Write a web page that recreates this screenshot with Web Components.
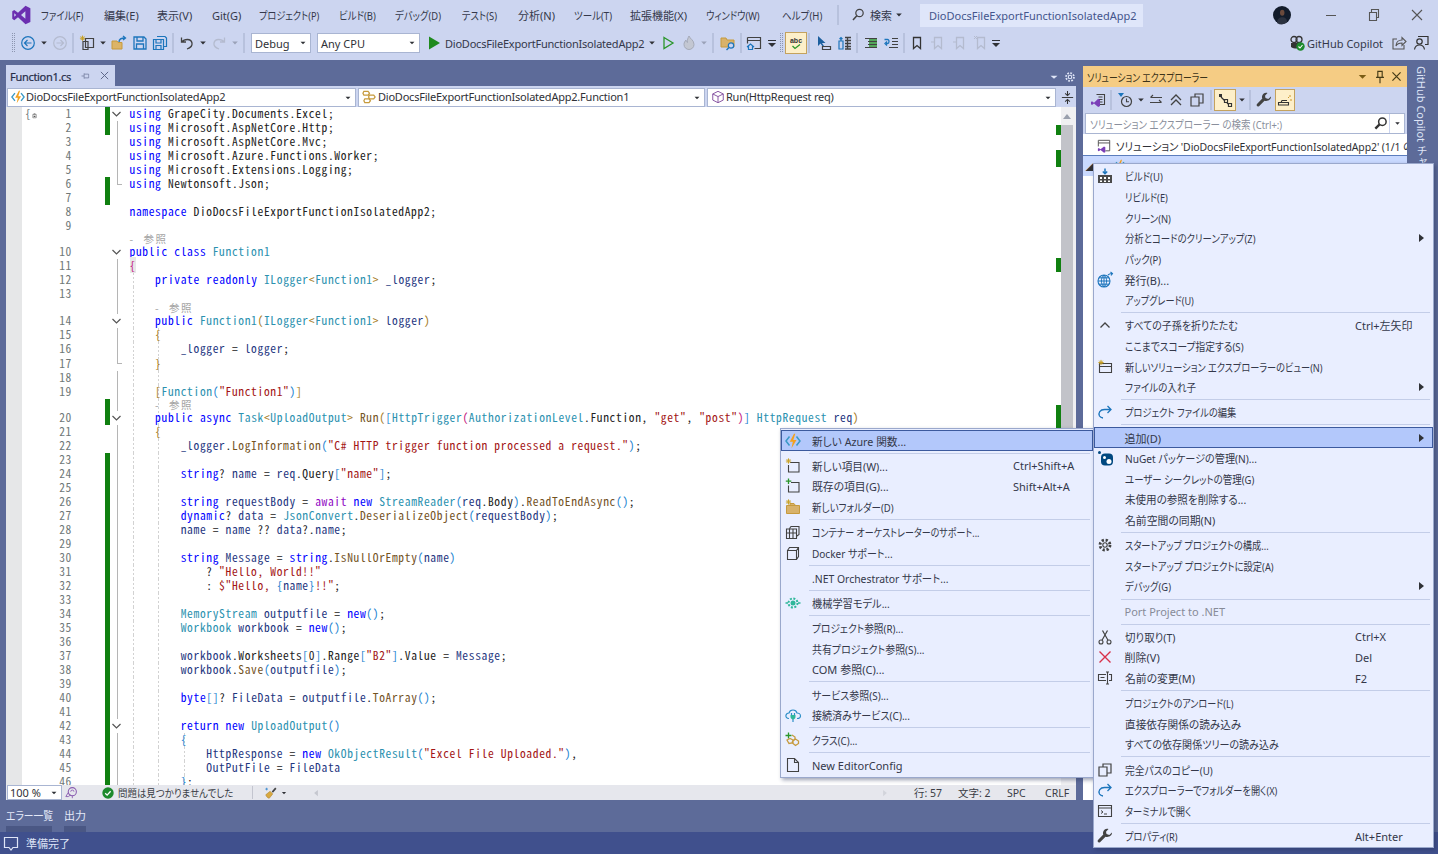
<!doctype html>
<html lang="ja"><head><meta charset="utf-8"><title>DioDocsFileExportFunctionIsolatedApp2</title>
<style>
html,body{margin:0;height:100%;overflow:hidden;background:#5d6b99}
body{font:11px "Noto Sans","Noto Sans CJK JP",sans-serif;font-feature-settings:"palt";color:#2f3136}
</style></head><body>
<vs-app>
  <vs-bar slot="title" h="30">
    <vs-tool w="41" i="logo" s="20" style="padding-left:0"></vs-tool>
    <vs-mi w="63">ファイル(F)</vs-mi><vs-mi w="53">編集(E)</vs-mi><vs-mi w="55">表示(V)</vs-mi><vs-mi w="47">Git(G)</vs-mi><vs-mi w="80">プロジェクト(P)</vs-mi><vs-mi w="56">ビルド(B)</vs-mi><vs-mi w="67">デバッグ(D)</vs-mi><vs-mi w="56">テスト(S)</vs-mi><vs-mi w="56">分析(N)</vs-mi><vs-mi w="56">ツール(T)</vs-mi><vs-mi w="76">拡張機能(X)</vs-mi><vs-mi w="76">ウィンドウ(W)</vs-mi><vs-mi w="53">ヘルプ(H)</vs-mi>
    <vs-tool w="6" i="sep"></vs-tool><vs-tool w="7"></vs-tool><vs-tool w="20" i="find"></vs-tool><vs-tool w="2"></vs-tool><vs-mi w="24">検索</vs-mi><vs-tool w="10" i="drop"></vs-tool>
    <vs-tool w="16"></vs-tool>
    <vs-titlebox>DioDocsFileExportFunctionIsolatedApp2</vs-titlebox>
    <vs-tool w="130"></vs-tool><vs-tool w="18" i="avatar" s="18"></vs-tool><vs-tool w="19"></vs-tool>
    <vs-tool w="42" i="min"></vs-tool><vs-tool w="43" i="restore"></vs-tool><vs-tool w="43" i="close"></vs-tool>
  </vs-bar>
  <vs-bar slot="tools" h="30" style="padding-bottom:4px;box-sizing:border-box">
    <vs-tool w="10"></vs-tool><vs-tool w="8" i="grip"></vs-tool><vs-tool w="20" i="back"></vs-tool><vs-tool w="12" i="drop"></vs-tool><vs-tool w="20" i="fwd"></vs-tool><vs-tool w="6" i="sep"></vs-tool>
    <vs-tool w="22" i="new"></vs-tool><vs-tool w="10" i="drop"></vs-tool><vs-tool w="22" i="open"></vs-tool><vs-tool w="20" i="save"></vs-tool><vs-tool w="20" i="saveall"></vs-tool><vs-tool w="6" i="sep"></vs-tool>
    <vs-tool w="22" i="undo"></vs-tool><vs-tool w="10" i="drop"></vs-tool><vs-tool w="22" i="redo"></vs-tool><vs-tool w="10" i="dropg"></vs-tool><vs-tool w="8" i="sep"></vs-tool><vs-tool w="3"></vs-tool>
    <vs-combo w="60" h="20">Debug</vs-combo><vs-tool w="6"></vs-tool><vs-combo w="103" h="20">Any CPU</vs-combo><vs-tool w="3"></vs-tool>
    <vs-tool w="22" i="play"></vs-tool><vs-mi w="202" style="letter-spacing:-.22px">DioDocsFileExportFunctionIsolatedApp2</vs-mi><vs-tool w="10" i="drop"></vs-tool><vs-tool w="22" i="playo"></vs-tool><vs-tool w="20" i="flame"></vs-tool><vs-tool w="10" i="dropg"></vs-tool><vs-tool w="8" i="sep"></vs-tool>
    <vs-tool w="22" i="fsearch"></vs-tool><vs-tool w="4" i="sep"></vs-tool><vs-tool w="22" i="win"></vs-tool><vs-tool w="13" i="over"></vs-tool><vs-tool w="7" i="grip"></vs-tool><vs-tool w="22" i="abc" sel></vs-tool><vs-tool w="4" i="sep"></vs-tool>
    <vs-tool w="25" i="cur1"></vs-tool><vs-tool w="17" i="cur2"></vs-tool><vs-tool w="8" i="sep"></vs-tool><vs-tool w="20" i="lines1"></vs-tool><vs-tool w="20" i="lines2"></vs-tool><vs-tool w="6" i="sep"></vs-tool>
    <vs-tool w="20" i="bm"></vs-tool><vs-tool w="22" i="bmg"></vs-tool><vs-tool w="21" i="bmg"></vs-tool><vs-tool w="21" i="bmx"></vs-tool><vs-tool w="10" i="over"></vs-tool>
    <vs-tool w="286"></vs-tool><vs-tool w="20" i="copilot"></vs-tool><vs-mi w="82">GitHub Copilot</vs-mi><vs-tool w="19" i="share"></vs-tool><vs-tool w="26" i="feedback"></vs-tool>
  </vs-bar>
  <vs-docs slot="left"></vs-docs>
  <vs-solution slot="right"></vs-solution>
  <vs-strip slot="strip">GitHub Copilot チャット</vs-strip>
  <vs-status slot="status">準備完了</vs-status>

  <vs-menu slot="over" x="780" y="428" w="314" ic="31" il="4" sc="61" pt="1.2" sl="28" style="height:350px">
    <vs-item i="bolt" hl>新しい Azure 関数...</vs-item><vs-sep></vs-sep>
    <vs-item i="newitem" sc="Ctrl+Shift+A">新しい項目(W)...</vs-item><vs-item i="additem" sc="Shift+Alt+A">既存の項目(G)...</vs-item><vs-item i="newfolder">新しいフォルダー(D)</vs-item><vs-sep></vs-sep>
    <vs-item i="container">コンテナー オーケストレーターのサポート...</vs-item><vs-item i="docker">Docker サポート...</vs-item><vs-sep></vs-sep>
    <vs-item>.NET Orchestrator サポート...</vs-item><vs-sep></vs-sep>
    <vs-item i="ml">機械学習モデル...</vs-item><vs-sep></vs-sep>
    <vs-item>プロジェクト参照(R)...</vs-item><vs-item>共有プロジェクト参照(S)...</vs-item><vs-item>COM 参照(C)...</vs-item><vs-sep></vs-sep>
    <vs-item>サービス参照(S)...</vs-item><vs-item i="cloud">接続済みサービス(C)...</vs-item><vs-sep></vs-sep>
    <vs-item i="cls">クラス(C)...</vs-item><vs-sep></vs-sep>
    <vs-item i="file">New EditorConfig</vs-item>
  </vs-menu>
  <vs-menu slot="over" x="1093" y="163" w="341" ic="30.5" il="3" sc="59" pt="2" sl="27">
    <vs-item i="build">ビルド(U)</vs-item><vs-item>リビルド(E)</vs-item><vs-item>クリーン(N)</vs-item><vs-item arrow>分析とコードのクリーンアップ(Z)</vs-item><vs-item>パック(P)</vs-item><vs-item i="globe">発行(B)...</vs-item><vs-item>アップグレード(U)</vs-item><vs-sep></vs-sep>
    <vs-item i="up" sc="Ctrl+左矢印">すべての子孫を折りたたむ</vs-item><vs-item>ここまでスコープ指定する(S)</vs-item><vs-item i="newview">新しいソリューション エクスプローラーのビュー(N)</vs-item><vs-item arrow>ファイルの入れ子</vs-item><vs-sep></vs-sep>
    <vs-item i="redirect">プロジェクト ファイルの編集</vs-item><vs-sep></vs-sep>
    <vs-item hl arrow>追加(D)</vs-item><vs-item i="nuget">NuGet パッケージの管理(N)...</vs-item><vs-item>ユーザー シークレットの管理(G)</vs-item><vs-item>未使用の参照を削除する...</vs-item><vs-item>名前空間の同期(N)</vs-item><vs-sep></vs-sep>
    <vs-item i="gear">スタートアップ プロジェクトの構成...</vs-item><vs-item>スタートアップ プロジェクトに設定(A)</vs-item><vs-item arrow>デバッグ(G)</vs-item><vs-sep></vs-sep>
    <vs-item dis>Port Project to .NET</vs-item><vs-sep></vs-sep>
    <vs-item i="cut" sc="Ctrl+X">切り取り(T)</vs-item><vs-item i="del" sc="Del">削除(V)</vs-item><vs-item i="rename" sc="F2">名前の変更(M)</vs-item><vs-sep></vs-sep>
    <vs-item>プロジェクトのアンロード(L)</vs-item><vs-item>直接依存関係の読み込み</vs-item><vs-item>すべての依存関係ツリーの読み込み</vs-item><vs-sep></vs-sep>
    <vs-item i="copy">完全パスのコピー(U)</vs-item><vs-item i="redirect">エクスプローラーでフォルダーを開く(X)</vs-item><vs-item i="term">ターミナルで開く</vs-item><vs-sep></vs-sep>
    <vs-item i="wrench" sc="Alt+Enter">プロパティ(R)</vs-item>
  </vs-menu>
</vs-app>
<script>
const st=(c,w=1.2,x='')=>`fill="none" stroke="${c}" stroke-width="${w}" ${x}`;
const D='#424242',B='#1c75bc',G='#b4bbcf',Y='#c69a3d';
const star=(x,y)=>`<path ${st('#c9a227',1)} d="M${x} ${y-2.6}v5.2M${x-2.6} ${y}h5.2M${x-1.8} ${y-1.8}l3.6 3.6M${x+1.8} ${y-1.8}l-3.6 3.6"/>`;
const dropP=c=>`<path fill="${c}" d="M5.2 6.5h5.6L8 9.5z"/>`;
const bm=c=>`<path ${st(c,1.3)} d="M4.5 2.5h7v11L8 10.5l-3.5 3z"/>`;
const ICONS={
logo:`<path fill="#6b2fb0" fill-rule="evenodd" d="M11.6.6 15.5 2.5v11l-3.9 1.9-6-5.6-3 2.3L1 11V5l1.6-1.1 3 2.3zM11.5 5 8 8l3.5 3zM2.6 6.6v2.8L4.2 8z"/>`,
sep:`<path stroke="#a3aeca" d="M8 -2v20"/>`,
grip:`<path stroke="#8c96b0" stroke-dasharray="1 1" d="M6.5 -2v20M8.5 -2v20"/>`,
drop:dropP('#2f3136'),dropg:dropP('#9aa2b8'),
find:`<circle cx="9.5" cy="6" r="3.7" ${st(D)}/><path ${st(D,1.5)} d="M6.8 8.8 3 13"/>`,
avatar:`<circle cx="8" cy="8" r="8" fill="#121c2b"/><ellipse cx="8.2" cy="6" rx="2" ry="2.6" fill="#6a4a3c"/><path fill="#2b3240" d="M3.5 15c.5-4 2.5-5 4.7-5s4 1 4.5 4.5A8 8 0 0 1 3.500 15z"/>`,
min:`<path stroke="#555" d="M3 8.5h10"/>`,
restore:`<path ${st('#555',1.1)} d="M3.500 5.500h7v8h-7zM5.500 5.500v-3h7v8h-2"/>`,
close:`<path ${st('#555',1.1)} d="M3 3l10 10M13 3 3 13"/>`,
back:`<circle cx="8" cy="8" r="6.300" ${st(B)}/><path ${st(B,1.200)} d="M11.500 8h-7M7.500 5 4.500 8l3 3"/>`,
fwd:`<circle cx="8" cy="8" r="6.300" ${st(G)}/><path ${st(G,1.200)} d="M4.500 8h7M8.500 5l3 3-3 3"/>`,
new:`<path ${st(D)} d="M6.500 3.500h8v9h-8zM4 6.500h5v8H4z"/>${star(3.500,3.200)}`,
open:`<path fill="#dcb467" stroke="${Y}" d="M1 6h5l1 1.500h4V14H1z"/><path ${st(B,1.300)} d="M8 7c0-3 2-4 6-4M12 1l2.500 2L12 5"/>`,
save:`<path ${st(B,1.300)} d="M2 2h10l2 2v10H2zM5 2v4h6V2M4.500 14V9h7v5"/>`,
saveall:`<path ${st(B,1.200)} d="M5 1.500h8l1.500 1.500v8.500H12M3 4.500h8.500V14.500H1.500V4.500zM4 4.500V8h5V4.500M4 14.500v-4h5v4"/>`,
undo:`<path ${st(D,1.300)} d="M2.500 2.500v4.500H7M3 7c2-3 9-4 10 1 .5 3-2 5-5 6"/>`,
redo:`<path ${st(G,1.300)} d="M13.500 2.500v4.500H9M13 7c-2-3-9-4-10 1-.5 3 2 5 5 6"/>`,
play:`<path fill="#1e8a1e" d="M3 1.500 14 8 3 14.500z"/>`,
playo:`<path ${st('#2a962a',1.300)} d="M4 2.500 13 8l-9 5.500z"/>`,
flame:`<path fill="#c3c7d2" stroke="#a5aab8" d="M8 1c1 3 5 4 5 8.500 0 3-2.500 5-5 5s-5-2-5-5c0-2 1-3.500 2-4.500 0 1.500 .5 2 1.500 2.500C6 5 7 3 8 1z"/>`,
fsearch:`<path fill="#d8b26a" stroke="${Y}" d="M1 3h5l1 2h7v7H1z"/><circle cx="11" cy="10.500" r="2.700" fill="#ccd5f0" stroke="${B}" stroke-width="1.200"/><path ${st(B,1.500)} d="M9 12.500 6.500 15"/>`,
win:`<path ${st(D)} d="M1.500 2.500h13v11h-6M1.500 2.500v6M1.500 5.500h13"/><path ${st(B,1.200)} d="M1 12l3.500-3L8 12M2.500 11v3.500h4V11"/>`,
over:`<path stroke="#2f3136" d="M4 5.500h8"/><path fill="#2f3136" d="M4 8h8l-4 4z"/>`,
abc:`<text x="8" y="7.500" text-anchor="middle" font-family="Liberation Sans" font-weight="700" font-size="7" fill="#333">abc</text><path ${st('#2a962a',1.300)} d="M4.500 11l2.500 2.500L12 9.500"/>`,
cur1:`<path fill="#1c5f9e" d="M2 1v10l2.500-2.500L7 12l1-1-2-3h3.500z"/><path ${st(D,1.200)} fill="#555" d="M6.500 11.500h8v3h-8z"/>`,
cur2:`<path ${st(B,1.200)} d="M2 6h4v8H2zM4 6V3M2.500 4 4 2.500 5.500 4"/><path stroke="${D}" stroke-width="1.300" d="M8 2.500h6M8 5.500h6M8 8.500h6M8 11.500h6M8 14h6M10.500 2v12"/>`,
lines1:`<path stroke="${D}" d="M2 3.500h12M5 6.500h9M5 9.500h9M2 12.500h12"/><path stroke="#2a962a" stroke-width="1.300" d="M6 5h8M6 8h8M6 11h8"/>`,
lines2:`<path ${st(B,1.300)} d="M1.500 4.500h3c2 0 2 4 0 4H3M4 6.500 2 8.500l2 2"/><path stroke="${D}" d="M9 3.500h6M9 6.500h6M9 9.500h6M6 12.500h9"/>`,
bm:bm('#333'),bmg:bm(G)+`<path ${st(G,1)} d="M1 7h3"/>`,bmx:bm(G)+`<path ${st(G,1)} d="M1 1l3 3M4 1 1 4"/>`,
copilot:`<circle cx="5" cy="4.500" r="3" ${st('#333',1.300)}/><circle cx="10" cy="4.500" r="3" ${st('#333',1.300)}/><path fill="#333" d="M2 8h11v4c-3 2-8 2-11 0z"/><circle cx="11.500" cy="11.500" r="4.200" fill="#1d8a2c"/><path ${st('#fff',1.100)} d="M9.500 11.500l1.500 1.500 2.500-3"/>`,
share:`<path ${st('#555',1.100)} d="M6 4H2v10h11v-4"/><path ${st('#555',1.100)} d="M5 11c0-4 3-6 6-6V2.500l4 4-4 4V8c-3 0-5 1-6 3z"/>`,
feedback:`<circle cx="6.500" cy="6.500" r="2.700" ${st('#333',1.200)}/><path ${st('#333',1.200)} d="M1.500 14.500c.5-3 2.500-4.500 5-4.500s4.500 1.500 5 4.500M5 1.500h10v8h-3"/>`,
ddrop:`<path fill="#7a5c14" d="M4 6.500h8L8 10.500z"/>`,
gearw:`<circle cx="8" cy="8" r="2" fill="none" stroke="#dfe5f7" stroke-width="1.300"/><circle cx="8" cy="8" r="4.500" fill="none" stroke="#dfe5f7" stroke-width="2" stroke-dasharray="2 1.500"/>`,
dropw:`<path fill="#dfe5f7" d="M4 6.500h8L8 10z"/>`,
tabpin:`<path ${st('#6f7a9c',1)} d="M2 8h3.500M5.500 4.500v7M5.500 5.500h6v1.500M5.500 10.500h6V9M11.500 7v2"/>`,
tabx:`<path ${st('#5c6688',1.200)} d="M3.500 3.500l9 9M12.500 3.500l-9 9"/>`,
split:`<path stroke="#333" d="M2 8h12"/><path ${st('#333',1.100)} d="M8 1v5M8 10v5M5.500 3.500 8 6l2.500-2.500M5.500 12.500 8 10l2.500 2.500"/>`,
cube:`<path ${st('#8552a1',1.100)} d="M8 1.500 14 4.500v7L8 14.500 2 11.500v-7zM2 4.500 8 7.500l6-3M8 7.500v7"/>`,
clsn:`<path ${st(Y,1.300)} d="M2 2.500h4.500L8 4.500 6.500 6.500H2L1 4.500zM8 6.500h4.500l1.500 2-1.500 2H8L7 8.500zM3 10.500h4.500l1.500 2-1.500 2H3l-1-2z"/>`,
bolt:`<path ${st('#3999c6',1.500)} d="M4.500 3.500 1 8l3.500 4.500M11.500 3.500 15 8l-3.500 4.500"/><path fill="#f4a11d" d="M9 .8 4.800 8.800h3L6.500 15.200l5-8.200H8.300l2-6.200z"/>`,
lock:`<path fill="#fff" stroke="#555" d="M1.500 2.500h6v6h-6z"/><path fill="#555" d="M3 1h3v1H3zM3 5h3v2H3z"/>`,
ok:`<circle cx="8" cy="8" r="6.500" fill="#1d8a2c"/><path ${st('#fff',1.500)} d="M4.800 8.200 7 10.400l4-4.400"/>`,
brush:`<path fill="#d9a93f" stroke="#a87d26" stroke-width=".6" d="M2 10l5-4 3 3-4 5c-1.500 0-3.500-2-4-4z"/><path stroke="#444" stroke-width="2" d="M9.500 7l4-4.500"/><path stroke="#3a8ad0" d="M3 2v3M1.500 3.500h3"/>`,
brain:`<circle cx="9" cy="7" r="5" ${st('#8a5db0',1.300)}/><path ${st('#8a5db0',1.100)} d="M7 7a2 2 0 1 1 4 0M4 8 1 13h3l3-2M9 12v3"/>`,
larrow:`<path fill="#c5c7cf" d="M11 3v10L5 8z"/>`,
rarrow:`<path fill="#d2d4db" d="M5 3v10l6-5z"/>`,
bubble:`<path ${st('#dfe5f7',1.200)} d="M1.500 2.500h13v10H10l-2 2.500-2-2.500H1.500z"/>`,
vsdoc:`<path ${st(D,1.100)} d="M6.500 2.500h8v10H9M8.500 5h4M8.500 7.500h4M8.500 10h4"/><path fill="#7b3fb8" d="M1 10l1-.7 2 1.500L8.200 6.800 10 8v6l-1.800 1-4.200-3.500-2 1.500-1-.7z"/>`,
clock:`<circle cx="9.500" cy="9.500" r="5" ${st(D,1.200)}/><path ${st(D,1.100)} d="M9.500 6.500v3.200h2.500"/><path fill="${B}" d="M1 1h6L4 5z"/>`,
sync:`<path ${st('#444',1.100)} d="M14 5.500H2.500M5 3 2.500 5.500M2 10.500h11.500M11 8l2.500 2.500"/>`,
coll:`<path ${st(D,1.300)} d="M3 8l5-5 5 5M3 13l5-5 5 5"/>`,
copy:`<path ${st(D,1.200)} d="M6 5H2v9h8v-9H6zM6 5V2h8v9h-4"/>`,
tree:`<path ${st('#333',1.200)} d="M3 3v0M4 5l4 4M10 11l1 1"/><path fill="#333" d="M2 2h3v3H2z"/><path ${st('#333')} d="M7.500 7.500h3v3h-3zM11.500 11.500h3v3h-3z"/>`,
wrench:`<path fill="${D}" d="M15 4.500 12.300 7 9.500 6 9 3.700 11.500 1C9.200.2 6.400 1.500 6 4.500c-.1.800 0 1.500.3 2L1 12c-1 1.200.2 3 1.500 2.500l.5-.3 5.500-5.500c3 1 7-1 6.500-4.700z"/>`,
pending:`<path ${st('#333',1.100)} d="M1.500 10.500h10v2.500h-10zM4 10.500l1-2h5"/><path stroke="#c9942c" d="M13 3v2M11 5l1 1M13 8h2"/>`,
search2:`<circle cx="10" cy="6" r="4" ${st('#333',1.600)}/><path stroke="#333" stroke-width="2.500" d="M7 9 2.500 13.500"/>`,
solution:`<path ${st('#555',1.100)} d="M1.500 1.500h13v12h-5M1.500 1.500v7M1.500 4.500h13"/><path fill="#7b3fb8" d="M1 11l1-.7 2 1.500 4-3.300 1.500 1v5.500l-1.500 .7-4-3.200-2 1.500-1-.7z"/>`,
pin:`<path ${st('#453b16',1.300)} d="M5.500 1.500h5v7h-5zM3.500 8.500h9M8 8.500V15"/>`,
xd:`<path ${st('#453b16',1.500)} d="M3 3l10 10M13 3 3 13"/>`,
build:`<path fill="#4a4a4a" d="M1 7h14v8H1z"/><path fill="#fff" d="M3 9h2v2H3zM7 9h2v2H7zM11 9h2v2h-2zM3 12.500h2v1.500H3zM7 12.500h2v1.500H7zM11 12.500h2v1.500h-2z"/><path ${st(B,1.500)} d="M8 .5v5M5.800 3.500 8 5.700l2.200-2.200"/>`,
globe:`<circle cx="7" cy="9" r="6" ${st(B,1.100)}/><path ${st(B,1)} d="M1 9h12M2 5.800h10M2 12.200h10M7 3v12M7 3C3.500 6 3.500 12 7 15M7 3c3.500 3 3.500 9 0 12"/><path ${st(B,1.100)} d="M11 3c1-1 2-1.500 4-1.500M13.500 0 15.500 1.500l-1.500 2"/>`,
up:`<path ${st(D,1.300)} d="M3.500 10.500 8 6l4.500 4.500"/>`,
newview:`<path ${st(D,1.100)} fill="#f4f5fb" d="M2.500 4.500h12v9h-12zM2.500 7.500h12"/>${star(4,3.500)}`,
redirect:`<path ${st(B,1.300)} d="M14 5.500H7.500C3 5.500 1 9 2.500 12c.7 1.200 2 1.800 3.500 2M10.500 2l3.500 3.500L10.500 9"/>`,
nuget:`<circle cx="2.500" cy="2.500" r="1.500" fill="#004880"/><rect x="4" y="3.500" width="12" height="12" rx="4" fill="#004880"/><circle cx="7.500" cy="7.500" r="1.500" fill="#fff"/><circle cx="12" cy="11.500" r="2.500" fill="#fff"/>`,
gear:`<circle cx="8" cy="8" r="2.200" ${st(D,1.100)}/><circle cx="8" cy="8" r="5" ${st(D,2.800,'stroke-dasharray="2.200 1.730"')}/>`,
cut:`<circle cx="4" cy="13" r="2" ${st(D,1.100)}/><circle cx="12" cy="13" r="2" ${st(D,1.100)}/><path ${st(D,1.200)} d="M5 11.300 10.500 1.500M11 11.300 5.500 1.500"/>`,
del:`<path ${st('#d8304a',1.400)} d="M2.500 2.500l11 11M13.500 2.500l-11 11"/>`,
rename:`<path ${st(D,1.100)} d="M9 4.500H1.500v6H9M12 4.500h2.500v6H12M10.500 2v12M9 2h3M9 14h3"/><path stroke="${D}" d="M3.500 7.500h4"/>`,
term:`<path ${st(D,1.100)} d="M1.500 2.500h13v11h-13zM1.500 5h13"/><path ${st(D,1)} d="M4 7.500 6 9l-2 1.500M7 11h3"/>`,
newitem:`<path ${st(D,1.100)} d="M5 4.500h9v9.500H3.500V7"/>${star(3.500,3)}`,
additem:`<path ${st(D,1.100)} d="M6 4.500h8v9.500H3.500V7.500"/><path stroke="#2a962a" stroke-width="1.300" d="M3.500 .5v5.500M.8 3.200h5.500"/>`,
newfolder:`<path fill="#d8b26a" stroke="${Y}" d="M1.500 6.500h13v8h-13z"/><path fill="#d8b26a" stroke="${Y}" d="M5 4.500h4l1.500 2H5z"/>${star(3.500,3)}`,
container:`<path ${st(D,1.100)} d="M4.500 4.500 6 2.500h8v8l-2 1.500M1.500 5h10v9.500h-10zM4.500 5v9.500M8 5v9.500M1.500 9h10"/>`,
docker:`<path ${st(D,1.100)} d="M2.500 5.500h9v9h-9zM2.500 5.500l2-3h9v9l-2 3M11.500 5.500l2-3"/>`,
ml:`<circle cx="8" cy="8" r="2.500" fill="#2fb79a"/><circle cx="8" cy="8" r="4.500" ${st('#2fb79a',2,'stroke-dasharray="2 1.500"')}/><path stroke="#2fb79a" stroke-width="1.300" d="M.5 8h2.500M13 8h2.500"/>`,
cloud:`<path ${st('#2e8fc8',1.200)} d="M4 11.500C1.500 11.500 .5 9.500 1 8c.5-1.500 2-2 3-2 .5-2 2-3 4-3s3.500 1 4 3c1.500 0 3.500 1 3.500 3s-1.500 2.500-3.500 2.500"/><path stroke="#2e8fc8" stroke-width="1.200" d="M8 12v3M6.500 6v2M9.500 6v2"/><path fill="#2fb79a" d="M5.500 8h5v2c0 1.500-1.500 2.500-2.500 2.500S5.500 11.500 5.500 10z"/>`,
cls:`<path stroke="#2a962a" stroke-width="1.300" d="M3.500 .5v6M.5 3.500h6"/><path ${st(Y,1.300)} d="M7 3l3 2v2l-2 1.500M8 9l2.500-2 3 2v2.500l-3 2-2.500-2zM2 8l3-1.500 3 1.500-1 3-3 .5z"/>`,
file:`<path ${st(D,1.100)} d="M2.500 1.500h7l4 4v9h-11zM9.500 1.500v4h4"/>`
};
function def(name,css,html,init){customElements.define(name,class extends HTMLElement{
  constructor(){super();this.attachShadow({mode:'open'}).innerHTML=`<style>${css}</style>${html}`}
  connectedCallback(){init&&init.call(this)}
})}
const icon=(n,s=16)=>`<vs-icon i="${n}" s="${s}"></vs-icon>`;
def('vs-icon',':host{display:inline-flex;flex:none}svg{display:block;overflow:visible}','',function(){
  const s=this.getAttribute('s')||16;const n=this.getAttribute('i');
  if(!this.shadowRoot.querySelector('svg'))this.shadowRoot.innerHTML+=`<svg width="${s}" height="${s}" viewBox="0 0 16 16">${ICONS[n]||''}</svg>`;
});
def('vs-app',`:host{display:grid;grid-template-rows:30px 30px 772px 22px;width:1438px;height:854px;position:relative;overflow:hidden;background:#5d6b99}
 .m{display:flex;min-height:0}`,
 `<slot name="title"></slot><slot name="tools"></slot><div class="m"><slot name="left"></slot><slot name="right"></slot><slot name="strip"></slot></div><slot name="status"></slot><slot name="over"></slot>`);
def('vs-bar',':host{display:flex;align-items:center;background:#ccd5f0;overflow:hidden;height:30px}','<slot></slot>');
def('vs-mi',':host{display:block;flex:none;white-space:nowrap;color:#34384a;font-size:11px}','<slot></slot>',function(){this.style.width=this.getAttribute('w')+'px'});
def('vs-tool',':host{display:flex;flex:none;align-items:center;justify-content:center;height:22px;box-sizing:border-box}:host([sel]){background:#fdefc9;border:1px solid #c4a25e}','<slot></slot>',function(){
  this.style.width=this.getAttribute('w')+'px';
  const n=this.getAttribute('i');
  if(n&&!this.querySelector('vs-icon'))this.innerHTML=icon(n,this.getAttribute('s')||16);
});
def('vs-titlebox',':host{display:flex;align-items:center;flex:none;width:223px;height:23px;box-sizing:border-box;padding-left:9px;background:#dfe6fa;color:#44558c;white-space:nowrap;font-size:11px}','<slot></slot>');
def('vs-combo',`:host{display:flex;align-items:center;flex:none;box-sizing:border-box;background:#fff;border:1px solid #a9b5d2;padding-left:3px;white-space:nowrap;overflow:hidden;color:#2f3136;font-size:11px}
 slot{display:block;flex:1;min-width:0}.a{flex:none;width:14px;height:14px;display:flex;align-items:center;justify-content:center}`,
 `<slot></slot><span class="a">${icon('drop',14)}</span>`,function(){
  if(this.hasAttribute('w'))this.style.width=this.getAttribute('w')+'px';
  this.style.height=(this.getAttribute('h')||19)+'px';
});
def('vs-docs',`:host{display:flex;flex-direction:column;flex:none;width:1083px;height:772px;padding-left:6px;padding-right:7px;box-sizing:border-box}
 .hd{height:26px;display:flex;align-items:flex-end;flex:none}
 .tab{width:109px;height:21px;background:#ccd5f0;display:flex;align-items:center;box-sizing:border-box;padding-left:4px;color:#262d48;font-size:11px;-webkit-text-stroke:.2px #262d48}
 .tab b{font-weight:400;width:70px;letter-spacing:-.3px;white-space:nowrap;padding-top:1px}
 .sp{flex:1}.ctl{display:flex;height:20px;align-items:center;padding-top:2px;box-sizing:border-box;margin-right:-1px}
 .nav{height:21px;flex:none;background:#ccd5f0;display:flex;align-items:flex-end;padding-left:1px;gap:2px}
 .n{display:inline-flex;align-items:center;gap:1px;letter-spacing:-.22px;padding-top:1px}
 .btn{width:19px;display:flex;justify-content:center;padding-bottom:2px}
 vs-editor{flex:1;min-height:0}
 .bot{height:15px;flex:none;background:#e6e7ed;display:flex;align-items:center;padding-left:1px;color:#3a3d45;font-size:10.500px;white-space:nowrap}
 .bot span{flex:none}
 .pt{height:32px;flex:none;display:flex;gap:12px;color:#e4e9f8;font-size:11px;box-sizing:border-box;white-space:nowrap}
 .pt div{border-bottom:6px solid #4a5784;box-sizing:border-box;height:32px;padding-top:8px;line-height:16px}
 .pt span{display:block}`,
 `<div class="hd"><div class="tab"><b>Function1.cs</b>${icon('tabpin',12)}<span style="width:6px"></span>${icon('tabx',13)}</div><div class="sp"></div>
  <div class="ctl">${icon('dropw',14)}<span style="width:2px"></span>${icon('gearw',14)}</div></div>
 <div class="nav"><vs-combo w="349"><span class="n">${icon('bolt',14)}DioDocsFileExportFunctionIsolatedApp2</span></vs-combo>
  <vs-combo w="347"><span class="n">${icon('clsn',15)}DioDocsFileExportFunctionIsolatedApp2.Function1</span></vs-combo>
  <vs-combo w="349"><span class="n">${icon('cube',14)}Run(HttpRequest req)</span></vs-combo>
  <span class="btn">${icon('split',15)}</span></div>
 <vs-editor></vs-editor>
 <div class="bot"><vs-combo w="55" h="15"><span style="margin-left:-1px">100 %</span></vs-combo><span style="width:3px"></span>${icon('brain',13)}<span style="width:23px"></span>${icon('ok',14)}<span style="width:3px"></span><span style="width:134px">問題は見つかりませんでした</span><span style="width:1px;height:13px;background:#c3c5cf"></span><span style="width:11px"></span>${icon('brush',14)}${icon('drop',12)}<span style="width:21px"></span>${icon('larrow',10)}<span style="width:559px"></span>${icon('rarrow',10)}<span style="width:24px"></span><span style="width:44px">行: 57</span><span style="width:49px">文字: 2</span><span style="width:38px">SPC</span><span>CRLF</span></div>
 <div class="pt"><div style="width:46px"><span>エラー一覧</span></div><div style="width:22px"><span>出力</span></div></div>`);
const CODE=`«k|using» GrapeCity.Documents.Excel;
«k|using» Microsoft.AspNetCore.Http;
«k|using» Microsoft.AspNetCore.Mvc;
«k|using» Microsoft.Azure.Functions.Worker;
«k|using» Microsoft.Extensions.Logging;
«k|using» Newtonsoft.Json;

«k|namespace» DioDocsFileExportFunctionIsolatedApp2;

@12:0
«k|public» «k|class» «t|Function1»
«q|{»
    «k|private» «k|readonly» «t|ILogger»«y|<»«t|Function1»«y|>» «p|_logger»;

@13:1
    «k|public» «t|Function1»«y|(»«t|ILogger»«y|<»«t|Function1»«y|>» «p|logger»«y|)»
    «y|{»
        «p|_logger» = «p|logger»;
    «y|}»

    «y|[»«t|Function»«b|(»«s|"Function1"»«b|)»«y|]»
@12:1
    «k|public» «k|async» «t|Task»«y|<»«t|UploadOutput»«y|>» «m|Run»«y|(»«b|[»«t|HttpTrigger»«w|(»«t|AuthorizationLevel».Function, «s|"get"», «s|"post"»«w|)»«b|]» «t|HttpRequest» «p|req»«y|)»
    «y|{»
        «p|_logger».«m|LogInformation»«b|(»«s|"C# HTTP trigger function processed a request."»«b|)»;

        «k|string»? «p|name» = «p|req».Query«b|[»«s|"name"»«b|]»;

        «k|string» «p|requestBody» = «v|await» «k|new» «t|StreamReader»«b|(»«p|req».Body«b|)».«m|ReadToEndAsync»«b|()»;
        «k|dynamic»? «p|data» = «t|JsonConvert».«m|DeserializeObject»«b|(»«p|requestBody»«b|)»;
        «p|name» = «p|name» ?? «p|data»?.«p|name»;

        «k|string» «p|Message» = «k|string».«m|IsNullOrEmpty»«b|(»«p|name»«b|)»
            ? «s|"Hello, World!!"»
            : «s|$"Hello, »«b|{»«p|name»«b|}»«s|!!"»;

        «t|MemoryStream» «p|outputfile» = «k|new»«b|()»;
        «t|Workbook» «p|workbook» = «k|new»«b|()»;

        «p|workbook».Worksheets«b|[»0«b|]».Range«b|[»«s|"B2"»«b|]».Value = «p|Message»;
        «p|workbook».«m|Save»«b|(»«p|outputfile»«b|)»;

        «k|byte»«b|[]»? «p|FileData» = «p|outputfile».«m|ToArray»«b|()»;

        «k|return» «k|new» «t|UploadOutput»«b|()»
        «b|{»
            «p|HttpResponse» = «k|new» «t|OkObjectResult»«b|(»«s|"Excel File Uploaded."»«b|)»,
            «p|OutPutFile» = «p|FileData»
        «b|}»;`;
const esc=s=>s.replace(/&/g,'&amp;').replace(/</g,'&lt;').replace(/>/g,'&gt;');
const toks=l=>{let o='',i=0,re=/«(\w)\|([^»]*)»/g,m;while((m=re.exec(l))){o+=esc(l.slice(i,m.index))+`<span class="${m[1]}">${esc(m[2])}</span>`;i=re.lastIndex}return o+esc(l.slice(i))};
def('vs-editor',`:host{display:flex;background:#fff;overflow:hidden}
 .code{flex:1;min-width:0;overflow:hidden}
 .row{display:flex;height:14.040px;white-space:pre;font:11.500px/12px "Noto Sans CJK JP",sans-serif;font-feature-settings:"hwid";letter-spacing:.65px;font-kerning:none;color:#222}
 .g{flex:none;width:16px;background:#e6e7e8}
 .gl{flex:none;width:50px;text-align:right;color:#6f7878}
 .bl{flex:none;width:38px;display:flex}.gap{width:33px}
 .bar{width:5px}.on{background:#108010}
 .o{flex:none;width:15px}
 .o.vl{background:linear-gradient(#b5b5b5,#b5b5b5) 6.500px 0/1px 100% no-repeat}
 .o.tk{background:linear-gradient(#b5b5b5,#b5b5b5) 6.500px 0/1px 50% no-repeat,linear-gradient(#b5b5b5,#b5b5b5) 6.500px 50%/5px 1px no-repeat}
 .c{flex:1;padding-left:4.500px}
 .c.lens{font:10.500px/12px "Noto Sans CJK JP",sans-serif;font-feature-settings:normal;letter-spacing:1.500px;color:#a3a3a3;word-spacing:5px}
 .k{color:#0000ff}.t{color:#2b91af}.s{color:#a31515}.m{color:#74531f}.p{color:#1f377f}.y{color:#a57a1c}.b{color:#1a82d0}.w{color:#c4197e}.v{color:#8f08c4}
 .q{color:#c4197e;background:#e8e8e8}
 .sb{flex:none;width:20px;display:flex;background:#f0f0f2}
 .mk{width:5px;background:linear-gradient(#fff 0 18px,#108010 18px 28px,#fff 28px 43px,#108010 43px 60px,#fff 60px 151px,#108010 151px 165px,#fff 165px 298px,#108010 298px 321px,#fff 321px)}
 .tr{flex:1;display:flex;flex-direction:column;padding-right:3px}
 .up{height:18px;display:flex;align-items:center;justify-content:center;flex:none}
 .th{flex:1;background:#c2c3c9;margin-bottom:18px}`,
 `<div class="code"></div><div class="sb"><div class="mk"></div><div class="tr"><div class="up"><svg width="10" height="6"><path d="M1 6l4-5 4 5z" fill="#9aa0ad"/></svg></div><div class="th"></div></div></div>`,function(){
  const host=this.shadowRoot.querySelector('.code');if(host.children.length)return;
  const lines=CODE.split('\n');let n=0,h='';
  const chev=new Set([1,10,14,20,42]);
  const guides=(y)=>{let a=[];if(y>=12)a.push(7.5);if(y>=15)a.push(33);if(y>=43)a.push(58.500);
    return a.length?`background:${a.map(x=>`repeating-linear-gradient(#d2d2d2 0 2px,transparent 2px 4px) ${x}px 0/1px 100% no-repeat`).join(',')}`:''};
  const on=y=>(y<=2||y===6||y===7||y===20||y>=23);
  const vl=y=>((y>=1&&y<=6)||y>=10);
  for(const l of lines){
    if(l[0]==='@'){const [ht,lv]=l.slice(1).split(':');
      const next=n+1;
      h+=`<div class="row" style="height:${ht}px"><div class="g"></div><div class="gl"></div><div class="bl"><div class="gap"></div><div class="bar ${next===20?'on':''}"></div></div><div class="o ${vl(next)&&next!==10?'vl':''}"></div><div class="c lens" style="${guides(next)};line-height:${ht}px"><span style="display:inline-block;width:${lv*25.6}px"></span>- 参照</div></div>`;
      continue}
    n++;
    const tk=(n===6||n===17);
    const oc=chev.has(n)?`<svg width="15" height="14" style="display:block;background:#fff"><path d="M2.500 5 6.500 9l4-4" fill="none" stroke="#555" stroke-width="1.200"/></svg>`:'';
    const lc=tk?'tk':(vl(n)&&!chev.has(n)?'vl':'');
    const glyph=n===1?`<div class="gl" style="display:flex;justify-content:space-between;padding-left:3px;box-sizing:border-box"><span style="display:inline-flex;align-items:flex-start">{<span style="margin-top:6px;margin-left:1px;display:flex">${icon('lock',9)}</span></span><span>1</span></div>`:`<div class="gl">${n}</div>`;
    h+=`<div class="row"><div class="g"></div>${glyph}<div class="bl"><div class="gap"></div><div class="bar ${on(n)?'on':''}"></div></div><div class="o ${lc}">${oc}</div><div class="c" style="${guides(n)}">${toks(l)}</div></div>`;
  }
  host.innerHTML=h;
});
def('vs-solution',`:host{display:flex;flex-direction:column;flex:none;width:324px;height:734px;margin-top:6px;background:#fff;overflow:hidden}
 .t{height:21px;flex:none;background:#f5cc84;display:flex;align-items:center;padding-left:4px;color:#3c3318;font-size:11px;white-space:nowrap}
 .t b{font-weight:400;flex:1}
 .t vs-icon{margin-right:1px}
 .tb{height:25px;flex:none;background:#ccd5f0;display:flex;align-items:center;padding-left:4px}
 .s{height:24px;flex:none;background:linear-gradient(#ccd5f0 22px,#fff 22px);padding:1px 2px 0;display:flex;box-sizing:border-box}
 .sb{flex:1;background:#fff;border:1px solid #a9b5d2;display:flex;align-items:center;padding-left:4px;color:#8a8f9c;height:21px;box-sizing:border-box;font-size:11px}
 .sb span{flex:1;white-space:nowrap}
 .sb i{width:1px;height:19px;background:#ccd5f0;margin:0 1px}
 .row{height:19px;flex:none;display:flex;align-items:center;white-space:nowrap;overflow:hidden;font-size:11px;color:#2f3136}
 .row>span{flex:none}
 .sel{background:#c9d9ff;border-top:1px solid #5c7dbd;box-sizing:border-box;height:21px}`,
 `<div class="t"><b>ソリューション エクスプローラー</b>${icon('ddrop',15)}<span style="width:2px"></span>${icon('pin',14)}<span style="width:2px"></span>${icon('xd',13)}<span style="width:3px"></span></div>
 <div class="tb"><vs-tool w="21" i="vsdoc"></vs-tool><vs-tool w="6" i="sep"></vs-tool><vs-tool w="22" i="clock"></vs-tool><vs-tool w="10" i="drop"></vs-tool><vs-tool w="20" i="sync"></vs-tool><vs-tool w="20" i="coll"></vs-tool><vs-tool w="21" i="copy"></vs-tool><vs-tool w="7" i="sep"></vs-tool><vs-tool w="22" i="tree" sel></vs-tool><vs-tool w="11" i="drop"></vs-tool><vs-tool w="6" i="sep"></vs-tool><vs-tool w="21" i="wrench"></vs-tool><vs-tool w="1"></vs-tool><vs-tool w="20" i="pending" sel></vs-tool></div>
 <div class="s"><div class="sb"><span>ソリューション エクスプローラー の検索 (Ctrl+:)</span>${icon('search2',15)}<i></i>${icon('drop',13)}</div></div>
 <div class="row"><span style="width:14px"></span>${icon('solution',14)}<span style="width:5px"></span><span style="letter-spacing:-.1px">ソリューション 'DioDocsFileExportFunctionIsolatedApp2' (1/1 の</span></div>
 <div class="row sel"><span style="width:13px;text-align:center;font-size:8px">◢</span><span style="width:17px"></span>${icon('bolt',14)}<span style="width:6px"></span><span>DioDocsFileExportFunctionIsolatedApp2</span></div>`);
def('vs-strip',`:host{display:block;flex:none;width:31px;height:772px;color:#dfe5f7;writing-mode:vertical-rl;padding:6px 3px 0 0;box-sizing:border-box;white-space:nowrap;font-size:11px;line-height:28px;overflow:hidden}`,'<slot></slot>');
def('vs-status',`:host{display:flex;align-items:center;background:#40508d;color:#dfe5f7;height:22px;font-size:11px;padding-left:3px}span.g{width:7px}.lb{display:block}`,`${icon('bubble',16)}<span class="g"></span><span class="lb"><slot></slot></span>`);
def('vs-menu',`:host{display:block;position:absolute;box-sizing:border-box;background:#e9eeff;border:1px solid #9aa8cc;box-shadow:2px 2px 4px rgba(40,50,90,.45);z-index:5}`,'<slot></slot>',function(){
  const a=k=>this.getAttribute(k);
  Object.assign(this.style,{left:a('x')+'px',top:a('y')+'px',width:a('w')+'px',paddingTop:a('pt')+'px',paddingBottom:'1px'});
  this.style.setProperty('--ic',a('ic')+'px');this.style.setProperty('--il',a('il')+'px');this.style.setProperty('--sc',a('sc')+'px');this.style.setProperty('--sl',a('sl')+'px');
});
def('vs-item',`:host{display:grid;grid-template-columns:var(--ic) 1fr var(--sc) 14px 5px;height:20.650px;align-items:center;white-space:nowrap;color:#34384a;font-size:11px}
 :host([hl]){background:#b3c8fb;box-shadow:inset 0 0 0 1px #3c5a9e}
 :host([dis]){color:#878b98}
 .i{display:flex;padding-left:var(--il)}.ar{display:flex;justify-content:center}
 .lb{display:block;justify-self:start}`,
 `<span class="i"></span><span class="lb"><slot></slot></span><span class="sc"></span><span class="ar"></span><span></span>`,function(){
  const r=this.shadowRoot,n=this.getAttribute('i'),s=this.getAttribute('sc');
  if(n)r.querySelector('.i').innerHTML=icon(n,16);
  if(s)r.querySelector('.sc').textContent=s;
  if(this.hasAttribute('arrow'))r.querySelector('.ar').innerHTML='<svg width="5" height="8"><path d="M0 0l5 4-5 4z" fill="#2f3136"/></svg>';
});
def('vs-sep',`:host{display:block;height:4.500px;box-sizing:border-box;padding:1.700px 3px 0 var(--sl)}div{height:1px;background:#c3cde8}`,'<div></div>');
/* The reference's UI font draws kana narrower than any installed font: narrow each string that holds kana. */
function narrow(root){
  const els=[...root.querySelectorAll('*')];
  for(const el of els){
    if(el.shadowRoot)narrow(el.shadowRoot);
    if(el.tagName==='STYLE'||el.tagName==='VS-STRIP')continue;
    const t=[...el.childNodes].filter(n=>n.nodeType===3).map(n=>n.data).join('').trim();
    if(!t)continue;
    const k=(t.match(/[\u30A0-\u30FF]/g)||[]).length,h=(t.match(/[\u3040-\u309F]/g)||[]).length;
    if(!(k+h))continue;
    const rg=document.createRange();rg.selectNodeContents(el);
    const w=rg.getBoundingClientRect().width;if(!w)continue;
    const target=(el.shadowRoot&&el.shadowRoot.querySelector('.lb'))||el;
    target.style.transformOrigin='0 50%';
    target.style.transform=`scaleX(${((w-(2*k+1.3*h))/w).toFixed(3)})`;
  }
}
narrow(document);
</script>
</body></html>
